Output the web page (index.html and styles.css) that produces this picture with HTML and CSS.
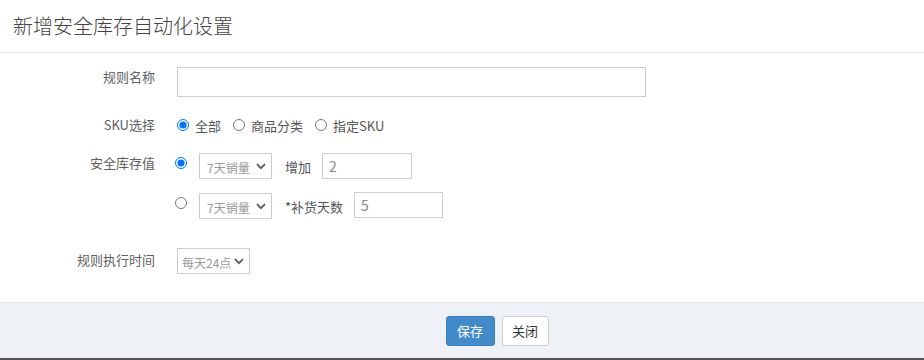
FILE: index.html
```html
<!DOCTYPE html>
<html lang="zh-CN">
<head>
<meta charset="utf-8">
<title>新增安全库存自动化设置</title>
<link rel="stylesheet" href="styles.css">
</head>
<body>
<div class="modal">
  <div class="modal-header">新增安全库存自动化设置</div>
  <div class="modal-body">
    <div class="row row-name">
      <label class="label">规则名称</label>
      <div class="control"><input type="text" class="input input-wide"></div>
    </div>
    <div class="row row-sku">
      <label class="label">SKU选择</label>
      <div class="control radios">
        <label class="radio-item"><input type="radio" name="sku" checked><span>全部</span></label>
        <label class="radio-item"><input type="radio" name="sku"><span>商品分类</span></label>
        <label class="radio-item"><input type="radio" name="sku"><span>指定SKU</span></label>
      </div>
    </div>
    <div class="row row-safe">
      <label class="label">安全库存值</label>
      <div class="control stack">
        <div class="line line-1">
          <input type="radio" name="safe" class="line-radio" checked>
          <span class="select-wrap">
            <select class="select"><option>7天销量</option></select>
            <svg class="chev" width="10" height="7" viewBox="0 0 10 7"><path d="M1 1.2 L5 5.2 L9 1.2" fill="none" stroke="#5c5c5c" stroke-width="1.8"/></svg>
          </span>
          <span class="text">增加</span>
          <input type="text" class="input input-small" value="2">
        </div>
        <div class="line line-2">
          <input type="radio" name="safe" class="line-radio">
          <span class="select-wrap">
            <select class="select"><option>7天销量</option></select>
            <svg class="chev" width="10" height="7" viewBox="0 0 10 7"><path d="M1 1.2 L5 5.2 L9 1.2" fill="none" stroke="#5c5c5c" stroke-width="1.8"/></svg>
          </span>
          <span class="text">*补货天数</span>
          <input type="text" class="input input-small" value="5">
        </div>
      </div>
    </div>
    <div class="row row-time">
      <label class="label">规则执行时间</label>
      <div class="control">
        <span class="select-wrap">
          <select class="select select-time"><option>每天24点</option></select>
          <svg class="chev" width="10" height="7" viewBox="0 0 10 7"><path d="M1 1.2 L5 5.2 L9 1.2" fill="none" stroke="#5c5c5c" stroke-width="1.8"/></svg>
        </span>
      </div>
    </div>
  </div>
  <div class="modal-footer">
    <button class="btn btn-primary">保存</button>
    <button class="btn btn-default">关闭</button>
  </div>
</div>
<div class="backdrop-strip"></div>
</body>
</html>
```
FILE: styles.css
```css
* { box-sizing: border-box; }
html, body { margin: 0; padding: 0; }
body {
  width: 924px;
  height: 360px;
  overflow: hidden;
  background: #5a5a5a;
  font-family: "Microsoft YaHei", "Noto Sans CJK SC", "Liberation Sans", sans-serif;
  color: #555;
}
.modal {
  background: #fff;
  height: 358px;
  display: flex;
  flex-direction: column;
}
.modal-header {
  height: 53px;
  padding: 13px 0 0 13px;
  font-size: 20px;
  line-height: 26px;
  font-weight: 300;
  color: #444;
  border-bottom: 1px solid #e5e5e5;
}
.modal-body {
  flex: 1;
  padding-top: 14px;
}
.row {
  display: flex;
  align-items: flex-start;
}
.label {
  width: 155px;
  flex: none;
  text-align: right;
  font-size: 13px;
  line-height: 20px;
  color: #606060;
}
.control { margin-left: 22px; }
.input {
  border: 1px solid #ccc;
  border-radius: 0;
  font-family: inherit;
  font-size: 14px;
  color: #888;
  padding: 0 6px;
  outline: none;
  background: #fff;
}
.input-wide { width: 469px; height: 30px; display: block; }
.row-sku { margin-top: 18px; }
.radios { display: flex; align-items: center; height: 20px; }
.radio-item {
  display: flex;
  align-items: center;
  font-size: 13px;
  color: #555;
  margin-right: 12px;
}
.radio-item input { margin: 0 6px 0 0; width: 12px; height: 12px; }
.row-safe { margin-top: 18px; }
.row-safe .control { margin-left: 20px; }
.stack { display: flex; flex-direction: column; gap: 14px; }
.line { display: flex; align-items: center; height: 26px; }
.line-radio { margin: 4px 12px 0 0; width: 12px; height: 12px; align-self: flex-start; }
.select-wrap {
  position: relative;
  display: inline-block;
  height: 26px;
}
.select {
  appearance: none;
  -webkit-appearance: none;
  display: block;
  width: 73px;
  height: 26px;
  border: 1px solid #ccc;
  border-radius: 0;
  background: #fff;
  font-family: inherit;
  font-size: 12px;
  color: #999;
  padding: 2px 0 0 7px;
  outline: none;
}
.chev {
  position: absolute;
  right: 6px;
  top: 10px;
  pointer-events: none;
}
.text { font-size: 13px; color: #555; margin: 0 11px 0 13px; }
.input-small { width: 90px; height: 26px; font-size: 14px; }
.line-1 .input-small { margin-top: -1px; }
.line-2 .input-small { width: 89px; margin-top: -3px; }
.row-time { margin-top: 29px; }
.row-time .label { margin-top: 2px; }
.select-time { width: 73px; padding-left: 4px; }
.modal-footer {
  height: 56px;
  background: #eef1f6;
  border-top: 1px solid #e3e5e8;
  display: flex;
  justify-content: center;
  align-items: center;
  gap: 7px;
  padding-left: 70px;
}
.btn {
  height: 30px;
  border-radius: 3px;
  font-family: inherit;
  font-size: 13px;
  padding: 0;
  cursor: pointer;
}
.btn-primary { background: #428bca; border: 1px solid #3a7fbd; color: #fff; width: 49px; }
.btn-default { background: #fff; border: 1px solid #ccc; color: #333; width: 47px; }
.backdrop-strip { height: 2px; background: #555; }
```
